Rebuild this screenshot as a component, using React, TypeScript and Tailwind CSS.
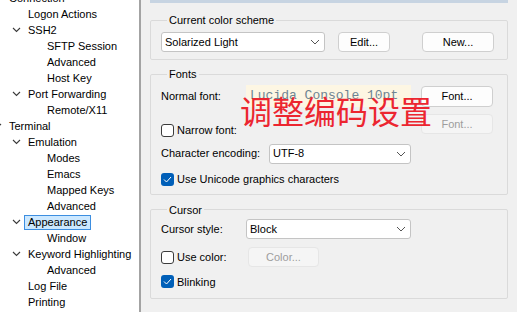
import type { ReactNode } from "react";

const font = { fontFamily: '"Liberation Sans", Arial, sans-serif' };

type Node = { label: string; level: 0 | 1 | 2; open?: boolean; selected?: boolean };

const tree: Node[] = [
  { label: "Connection", level: 0, open: true },
  { label: "Logon Actions", level: 1 },
  { label: "SSH2", level: 1, open: true },
  { label: "SFTP Session", level: 2 },
  { label: "Advanced", level: 2 },
  { label: "Host Key", level: 2 },
  { label: "Port Forwarding", level: 1, open: true },
  { label: "Remote/X11", level: 2 },
  { label: "Terminal", level: 0, open: true },
  { label: "Emulation", level: 1, open: true },
  { label: "Modes", level: 2 },
  { label: "Emacs", level: 2 },
  { label: "Mapped Keys", level: 2 },
  { label: "Advanced", level: 2 },
  { label: "Appearance", level: 1, open: true, selected: true },
  { label: "Window", level: 2 },
  { label: "Keyword Highlighting", level: 1, open: true },
  { label: "Advanced", level: 2 },
  { label: "Log File", level: 1 },
  { label: "Printing", level: 1 },
];

const indent = ["ml-[-7px]", "ml-[12px]", "ml-[31px]"];

function Chevron() {
  return (
    <svg width="9" height="6" viewBox="0 0 9 6" fill="none">
      <path d="M1 1 L4.5 4.5 L8 1" stroke="#3a3a3a" strokeWidth="1.1" />
    </svg>
  );
}

function Tree() {
  return (
    <div className="w-[141px] shrink-0 bg-white border-r-2 border-[#a3a3a3] overflow-hidden">
      <div className="mt-[-10px] flex flex-col">
        {tree.map((n, i) => (
          <div key={i} className={`h-[16px] flex items-center ${indent[n.level]}`}>
            <div className="w-[16px] flex items-center">{n.open && <Chevron />}</div>
            {n.selected ? (
              <span className="ml-[-4px] px-[3px] h-[15px] leading-[13px] bg-[#cce8ff] border border-[#3d8ee0] text-[11px] text-black whitespace-nowrap">
                {n.label}
              </span>
            ) : (
              <span className="text-[11px] leading-[14px] text-black whitespace-nowrap">{n.label}</span>
            )}
          </div>
        ))}
      </div>
    </div>
  );
}

function Group({ title, className, children }: { title: string; className: string; children: ReactNode }) {
  return (
    <fieldset className={`border border-[#dadada] rounded-[2px] ${className}`}>
      <legend className="ml-[6px] px-[2px] text-[11px] leading-[12px] text-black">{title}</legend>
      {children}
    </fieldset>
  );
}

function Select({ value, className }: { value: string; className: string }) {
  return (
    <div
      className={`h-[20px] bg-white border border-[#c4c4c4] rounded-[3px] flex items-center justify-between pl-[3px] pr-[4px] ${className}`}
    >
      <span className="text-[11px] text-black">{value}</span>
      <svg width="10" height="6" viewBox="0 0 10 6" fill="none">
        <path d="M1 1 L5 5 L9 1" stroke="#555" strokeWidth="1" />
      </svg>
    </div>
  );
}

function Button({ label, disabled, className }: { label: string; disabled?: boolean; className: string }) {
  return (
    <div
      className={`h-[20px] rounded-[4px] border flex items-center justify-center text-[11px] ${
        disabled ? "bg-[#f5f5f5] border-[#e6e6e6] text-[#9d9d9d]" : "bg-[#fdfdfd] border-[#cfcfcf] text-black"
      } ${className}`}
    >
      {label}
    </div>
  );
}

function Check({ checked, label }: { checked?: boolean; label: string }) {
  return (
    <div className="flex items-center">
      {checked ? (
        <div className="w-[13px] h-[13px] rounded-[3px] bg-[#005fb8] flex items-center justify-center">
          <svg width="9" height="7" viewBox="0 0 9 7" fill="none">
            <path d="M1 3.5 L3.5 6 L8 1" stroke="#fff" strokeWidth="1" />
          </svg>
        </div>
      ) : (
        <div className="w-[13px] h-[13px] rounded-[3px] bg-white border border-[#3b3b3b]" />
      )}
      <span className="ml-[3px] text-[11px] text-black">{label}</span>
    </div>
  );
}

export default function App() {
  return (
    <div className="w-[517px] h-[312px] flex bg-[#f0f0f0] overflow-hidden" style={font}>
      <Tree />

      <div className="relative flex-1 flex flex-col px-[9px]">
        <div className="h-[3px] bg-[#c7d4e2]" />

        <Group title="Current color scheme" className="mt-[11px] px-[10px] pt-[6px] pb-[7px]">
          <div className="flex items-center">
            <Select value="Solarized Light" className="w-[164px]" />
            <Button label="Edit..." className="ml-[13px] w-[52px]" />
            <Button label="New..." className="ml-[32px] w-[72px]" />
          </div>
        </Group>

        <Group title="Fonts" className="mt-[8px] pl-[10px] pr-[12px] pt-[5px] pb-[6px]">
          <div className="h-[22px] flex items-center">
            <span className="w-[85px] text-[11px] text-black">Normal font:</span>
            <div
              className="w-[165px] h-[22px] bg-[#fdf6e3] pl-[4px] flex items-center text-[13px] text-[#6f8592]"
              style={{ fontFamily: '"Liberation Mono", "Courier New", monospace' }}
            >
              Lucida Console 10pt
            </div>
            <Button label="Font..." className="ml-[10px] w-[72px] h-[21px]" />
          </div>
          <div className="mt-[7px] h-[20px] flex items-center">
            <div className="w-[260px] mt-[12px]">
              <Check label="Narrow font:" />
            </div>
            <Button label="Font..." disabled className="w-[72px]" />
          </div>
          <div className="mt-[10px] h-[19px] flex items-center">
            <span className="w-[108px] text-[11px] text-black">Character encoding:</span>
            <Select value="UTF-8" className="w-[142px] h-[20px]" />
          </div>
          <div className="mt-[8px]">
            <Check checked label="Use Unicode graphics characters" />
          </div>
        </Group>

        <Group title="Cursor" className="mt-[9px] pl-[10px] pr-[12px] pt-[4px] pb-[8px]">
          <div className="h-[19px] flex items-center">
            <span className="w-[85px] text-[11px] text-black">Cursor style:</span>
            <Select value="Block" className="w-[165px]" />
          </div>
          <div className="mt-[9px] h-[19px] flex items-center">
            <div className="w-[87px]">
              <Check label="Use color:" />
            </div>
            <Button label="Color..." disabled className="w-[71px]" />
          </div>
          <div className="mt-[7px]">
            <Check checked label="Blinking" />
          </div>
        </Group>

        <div
          className="absolute left-[99px] top-[88px] text-[32px] leading-[44px] text-[#ec2630] whitespace-nowrap"
          style={{ fontFamily: '"Noto Sans CJK SC", sans-serif' }}
        >
          调整编码设置
        </div>
      </div>
    </div>
  );
}
